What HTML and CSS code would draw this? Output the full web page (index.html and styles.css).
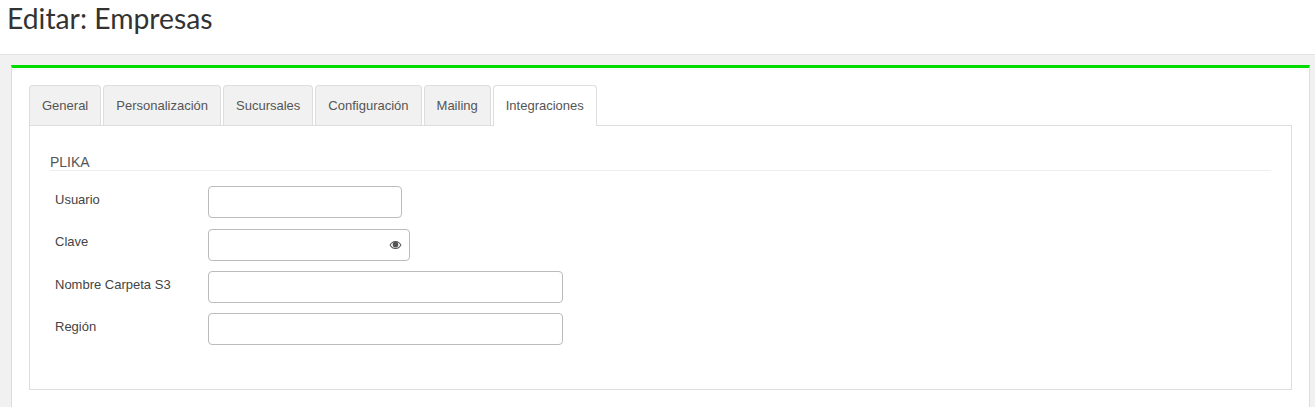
FILE: index.html
```html
<!DOCTYPE html>
<html lang="es">
<head>
<meta charset="utf-8">
<title>Editar: Empresas</title>
<link rel="stylesheet" href="styles.css">
</head>
<body>
<header class="page-head"><h1>Editar: Empresas</h1></header>
<main class="content">
  <section class="card">
    <ul class="tabs">
      <li class="tab">General</li>
      <li class="tab">Personalización</li>
      <li class="tab">Sucursales</li>
      <li class="tab">Configuración</li>
      <li class="tab">Mailing</li>
      <li class="tab active">Integraciones</li>
    </ul>
    <div class="pane">
      <h2 class="legend">PLIKA</h2>
      <div class="rows">
        <div class="row row-first"><label class="lbl">Usuario</label><input class="field w-sm" type="text"></div>
        <div class="row"><label class="lbl lbl-tight">Clave</label>
          <div class="pw">
            <input class="field w-pw" type="text">
            <svg class="eye" viewBox="0 0 16 12" width="13" height="10" aria-hidden="true"><path d="M8 1C4.6 1 2 3.2.6 6 2 8.8 4.6 11 8 11s6-2.2 7.4-5C14 3.2 11.400 1 8 1zm0 8.700C5.500 9.700 3.300 8.200 2.100 6 3 4.400 4.300 3.200 5.800 2.700 5 3.400 4.500 4.400 4.500 5.500a3.500 3.500 0 0 0 7 0c0-1.100-.5-2.100-1.300-2.800 1.500.5 2.800 1.700 3.700 3.300-1.200 2.200-3.400 3.700-5.900 3.700z" fill="#555"/></svg>
          </div>
        </div>
        <div class="row"><label class="lbl">Nombre Carpeta S3</label><input class="field w-lg" type="text"></div>
        <div class="row"><label class="lbl">Región</label><input class="field w-lg" type="text"></div>
      </div>
    </div>
  </section>
</main>
</body>
</html>
```
FILE: styles.css
```css
* { box-sizing: border-box; }
html, body { margin: 0; height: 407px; overflow: hidden; }
body { background: #f1f1f1; font-family: "Liberation Sans", Arial, sans-serif; color: #444; }
.page-head { height: 55px; background: #fff; border-bottom: 1px solid #e4e4e4; padding: 1px 7px 0; }
.page-head h1 { margin: 0; font: 400 28.3px/34px Lato, sans-serif; color: #333; }
.content { padding: 10px 5px 0 11px; }
.card { background: #fff; border-top: 3px solid #00dc00; border-left: 1px solid #ddd; border-right: 1px solid #ddd; padding: 17px 17px 0; height: 342px; }
.tabs { display: flex; gap: 2px; list-style: none; margin: 0; padding: 0; height: 41px; position: relative; z-index: 1; }
.tab { height: 40px; padding: 0 12px; background: #f1f1f1; border: 1px solid #ddd; border-bottom: 0; border-radius: 4px 4px 0 0; font-size: 13px; line-height: 39px; color: #555; }
.tab.active { height: 41px; background: #fff; }
.pane { margin-top: -1px; height: 265px; border: 1px solid #ddd; padding: 29px 20px 0; width: 1263px; }
.legend { margin: 0; height: 16px; font: 400 14px/14px "Liberation Sans", Arial, sans-serif; color: #555; border-bottom: 1px solid #eee; }
.rows { display: flex; flex-direction: column; gap: 10px; margin-top: 15px; }
.row { display: flex; align-items: flex-start; height: 32px; }
.row-first { margin-bottom: 1px; }
.lbl { width: 158px; padding-left: 5px; font-size: 13px; line-height: 28px; color: #444; }
.lbl-tight { line-height: 26px; }
.field { display: block; height: 32px; background: #fff; border: 1px solid #bbb; border-radius: 4px; outline: 0; padding: 0; }
.w-sm { width: 194px; }
.w-pw { width: 202px; }
.w-lg { width: 355px; }
.pw { position: relative; }
.eye { position: absolute; top: 11px; right: 8px; }
```
